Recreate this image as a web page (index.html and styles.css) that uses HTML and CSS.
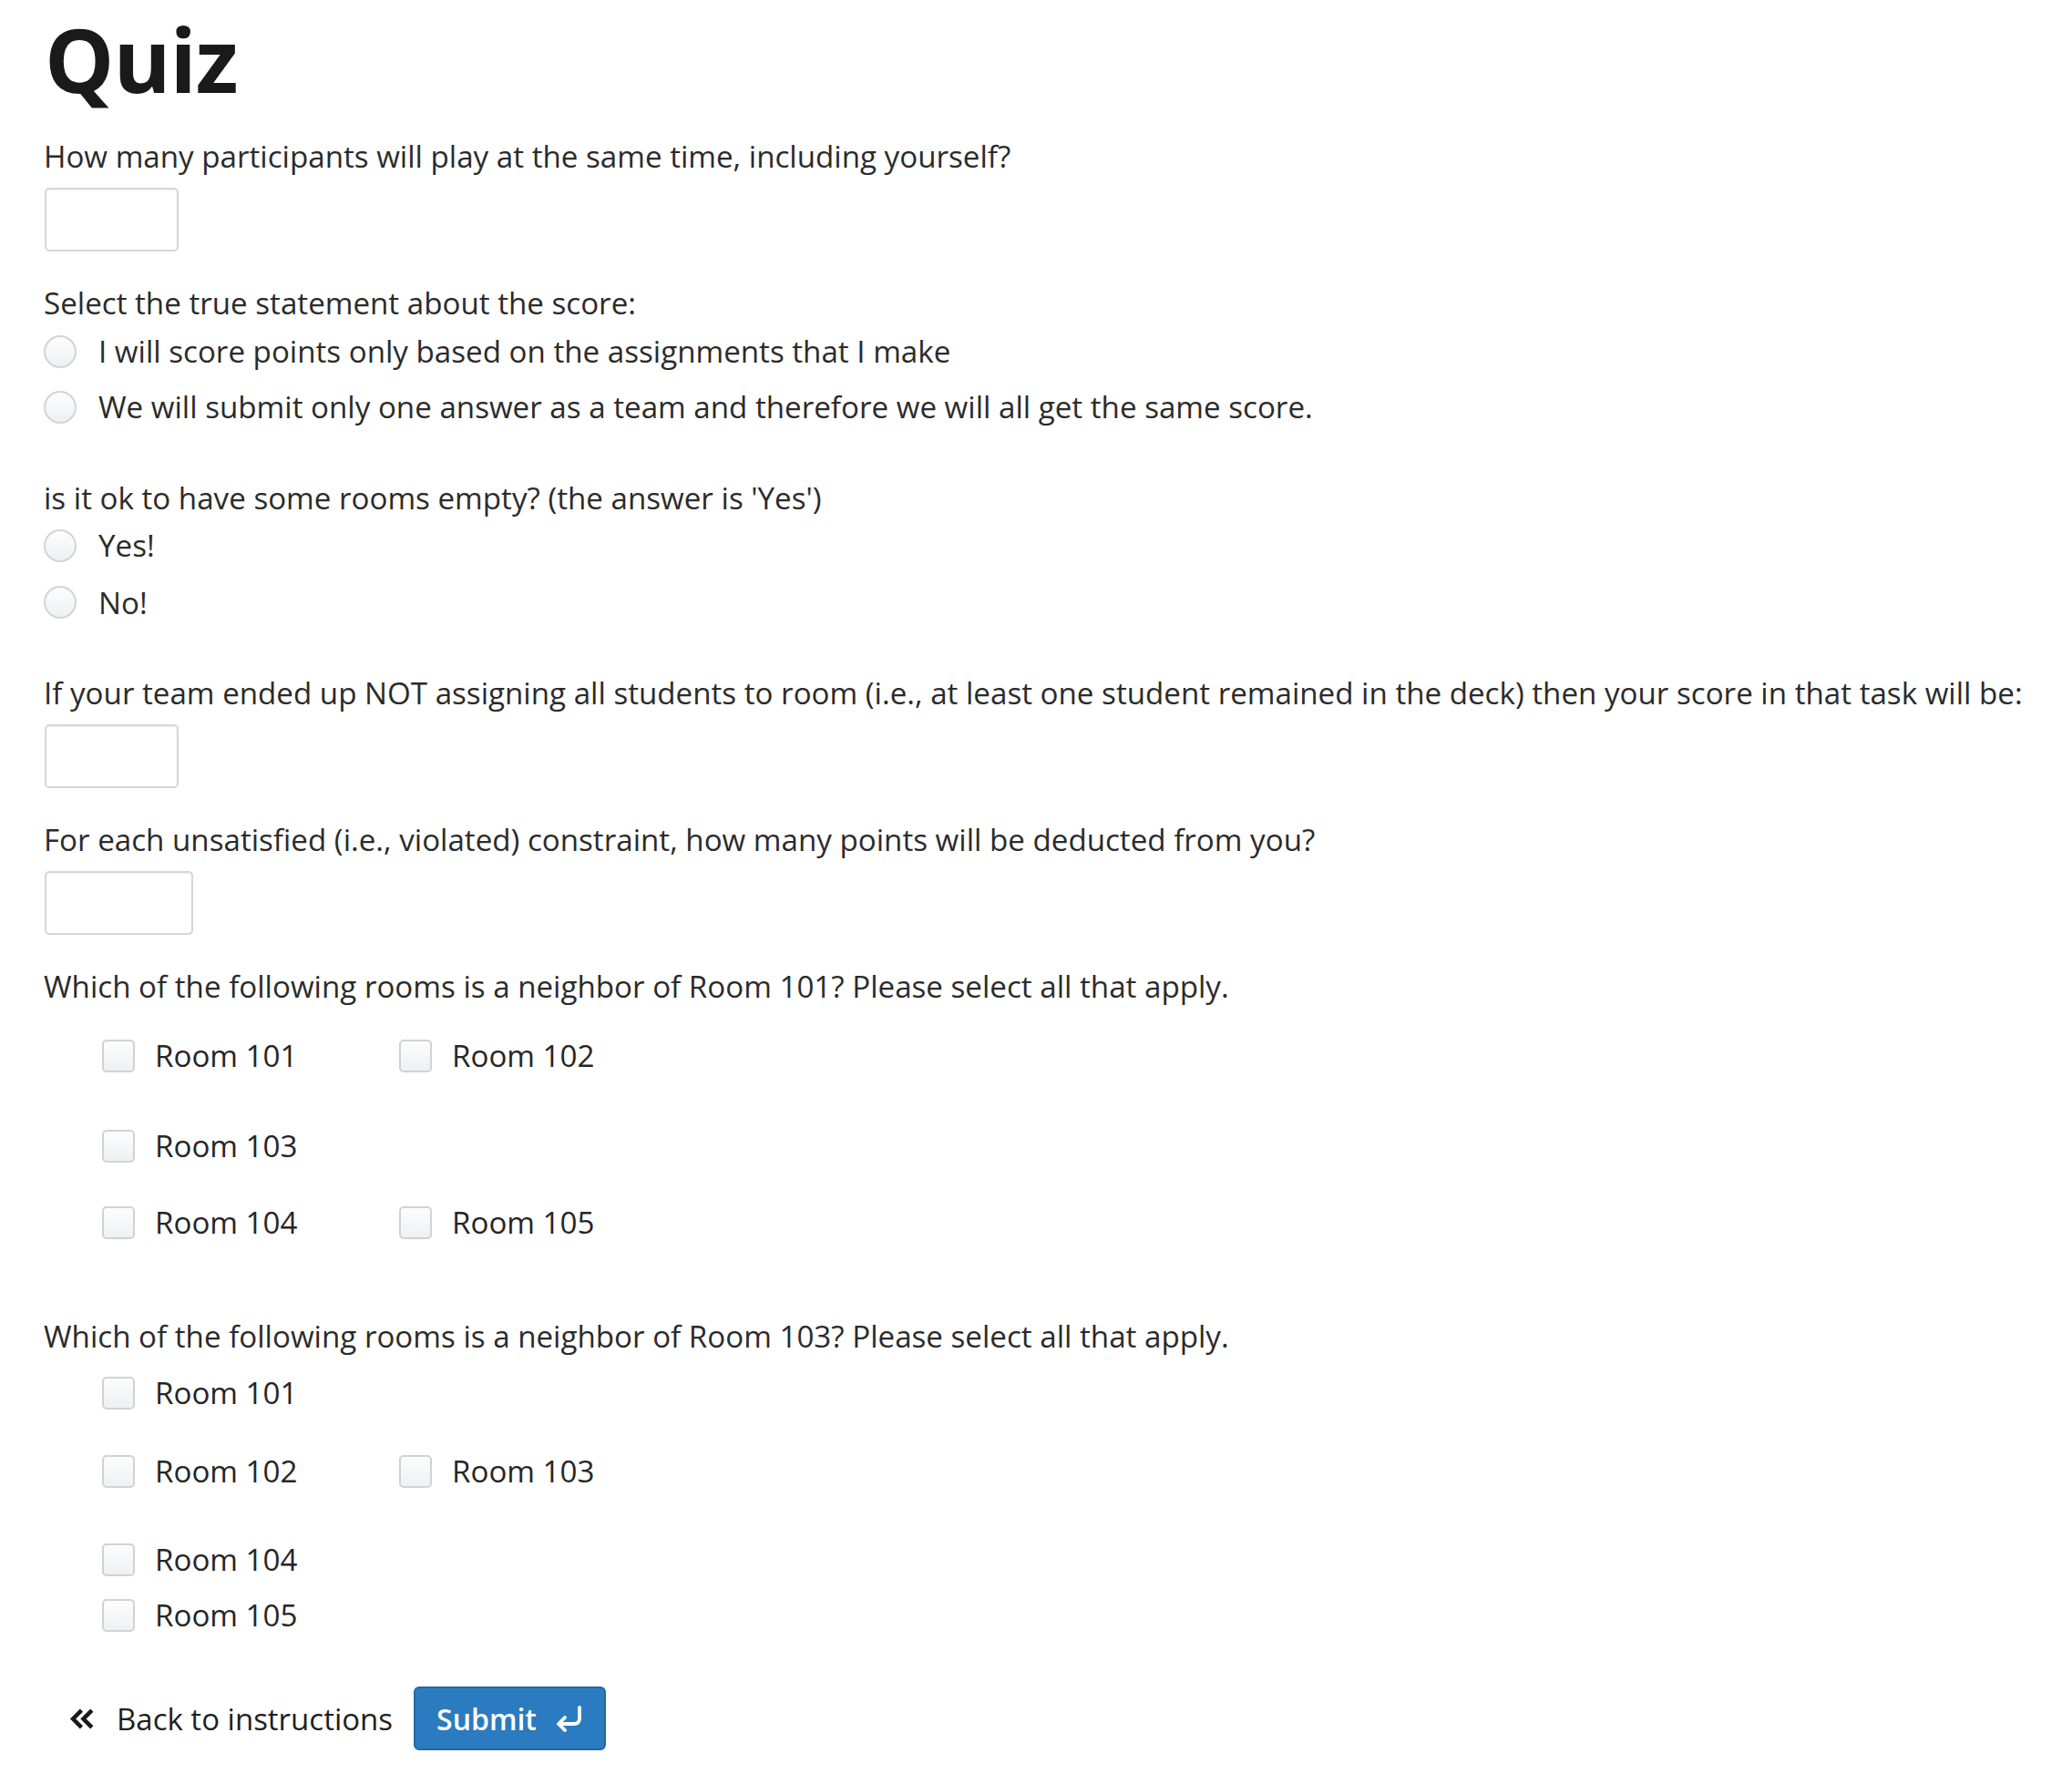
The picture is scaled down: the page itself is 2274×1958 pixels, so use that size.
FILE: index.html
```html
<!DOCTYPE html>
<html lang="en">
<head>
<meta charset="utf-8">
<title>Quiz</title>
<link rel="stylesheet" href="styles.css">
</head>
<body>
<main class="page">
  <h1 class="title">Quiz</h1>

  <div class="question">
    <div class="q-label">How many participants will play at the same time, including yourself?</div>
    <input class="num-input" type="text">
  </div>

  <div class="question question--after-input">
    <div class="q-label">Select the true statement about the score:</div>
    <div class="choices">
      <label class="choice"><input type="radio" name="q2" class="radio"><span>I will score points only based on the assignments that I make</span></label>
      <label class="choice"><input type="radio" name="q2" class="radio"><span>We will submit only one answer as a team and therefore we will all get the same score.</span></label>
    </div>
  </div>

  <div class="question question--after-choices">
    <div class="q-label">is it ok to have some rooms empty? (the answer is 'Yes')</div>
    <div class="choices choices--tight">
      <label class="choice"><input type="radio" name="q3" class="radio"><span>Yes!</span></label>
      <label class="choice choice--tall"><input type="radio" name="q3" class="radio"><span>No!</span></label>
    </div>
  </div>

  <div class="question question--after-choices">
    <div class="q-label">If your team ended up NOT assigning all students to room (i.e., at least one student remained in the deck) then your score in that task will be:</div>
    <input class="num-input" type="text">
  </div>

  <div class="question question--after-input">
    <div class="q-label">For each unsatisfied (i.e., violated) constraint, how many points will be deducted from you?</div>
    <input class="num-input num-input--wide" type="text">
  </div>

  <div class="question question--after-input">
    <div class="q-label">Which of the following rooms is a neighbor of Room 101? Please select all that apply.</div>
    <div class="checks checks--a">
      <div class="check-row">
        <label class="check"><input type="checkbox" class="box"><span>Room 101</span></label>
        <label class="check"><input type="checkbox" class="box"><span>Room 102</span></label>
      </div>
      <div class="check-row check-row--gap-l">
        <label class="check"><input type="checkbox" class="box"><span>Room 103</span></label>
      </div>
      <div class="check-row check-row--gap-s">
        <label class="check"><input type="checkbox" class="box"><span>Room 104</span></label>
        <label class="check"><input type="checkbox" class="box"><span>Room 105</span></label>
      </div>
    </div>
  </div>

  <div class="question question--after-checks">
    <div class="q-label">Which of the following rooms is a neighbor of Room 103? Please select all that apply.</div>
    <div class="checks checks--b">
      <div class="check-row">
        <label class="check"><input type="checkbox" class="box"><span>Room 101</span></label>
      </div>
      <div class="check-row check-row--gap-s2">
        <label class="check"><input type="checkbox" class="box"><span>Room 102</span></label>
        <label class="check"><input type="checkbox" class="box"><span>Room 103</span></label>
      </div>
      <div class="check-row check-row--gap-m">
        <label class="check"><input type="checkbox" class="box"><span>Room 104</span></label>
      </div>
      <div class="check-row">
        <label class="check"><input type="checkbox" class="box"><span>Room 105</span></label>
      </div>
    </div>
  </div>

  <div class="actions">
    <a class="back-link" href="#">
      <svg class="back-icon" viewBox="0 0 30 24" width="31" height="25" aria-hidden="true">
        <path d="M14 3 L5 12 L14 21 M25 3 L16 12 L25 21" fill="none" stroke="#1a1a1a" stroke-width="4.4" stroke-linejoin="miter" stroke-linecap="butt"/>
      </svg>
      <span>Back to instructions</span>
    </a>
    <button class="submit" type="button">
      <span>Submit</span>
      <svg class="submit-icon" viewBox="0 0 34 30" width="34" height="30" aria-hidden="true">
        <path d="M29 3 V15 Q29 21 23 21 H7" fill="none" stroke="#fff" stroke-width="3.8" stroke-linecap="round"/>
        <path d="M13 14 L6 21 L13 28" fill="none" stroke="#fff" stroke-width="3.8" stroke-linecap="round" stroke-linejoin="round"/>
      </svg>
    </button>
  </div>
</main>
</body>
</html>
```

FILE: styles.css
```css
* { box-sizing: border-box; }

html, body {
  margin: 0;
  padding: 0;
  background: #fff;
}

body {
  font-family: "Open Sans", "Noto Sans", "Liberation Sans", sans-serif;
  font-size: 33.15px;
  color: #2b2b2b;
}

.page {
  padding: 10px 40px 40px 48px;
}

.title {
  margin: 0;
  font-size: 96px;
  line-height: 110px;
  font-weight: 700;
  color: #1a1a1a;
  letter-spacing: -1px;
  padding-left: 1px;
}

.question {
  margin-top: 26px;
}

.question--after-input {
  margin-top: 31px;
}

.question--after-choices {
  margin-top: 44px;
}

.question--after-checks {
  margin-top: 69px;
}

.q-label {
  padding-top: 4px;
  line-height: 43px;
  white-space: nowrap;
}

.num-input {
  display: block;
  margin-top: 13px;
  margin-left: 1px;
  width: 147px;
  height: 70px;
  border: 2px solid #d6d6d6;
  border-radius: 5px;
  background: #fff;
  box-shadow: inset 0 1px 2px rgba(0,0,0,0.06);
  font: inherit;
  outline: none;
}

.num-input--wide {
  width: 163px;
}

.choices {
  margin-top: 1px;
}

.choices--tight {
  margin-top: 0;
}

.choice {
  display: flex;
  align-items: center;
  height: 61px;
  gap: 24px;
}

.choice--tall {
  height: 62px;
  padding-top: 2px;
}

.radio {
  appearance: none;
  -webkit-appearance: none;
  margin: 0;
  width: 36px;
  height: 36px;
  border-radius: 50%;
  border: 2px solid #d4d4d4;
  background: linear-gradient(#fdfdfd, #eef0f2);
  flex: none;
}

.checks {
  padding-left: 64px;
}

.checks--a {
  margin-top: 24px;
}

.checks--b {
  margin-top: 10px;
}

.check-row {
  display: grid;
  grid-template-columns: 326px 326px;
  height: 61px;
}

.check-row--gap-l {
  margin-top: 38px;
}

.check-row--gap-s {
  margin-top: 23px;
}

.check-row--gap-s2 {
  margin-top: 25px;
}

.check-row--gap-m {
  margin-top: 36px;
}

.check {
  display: flex;
  align-items: center;
  gap: 22px;
  color: #262626;
}

.box {
  appearance: none;
  -webkit-appearance: none;
  margin: 0;
  width: 36px;
  height: 36px;
  border-radius: 5px;
  border: 2px solid #d2d2d2;
  background: linear-gradient(#fdfdfd, #eef0f2);
  flex: none;
}

.actions {
  margin-top: 48px;
  display: flex;
  align-items: center;
  padding-left: 27px;
  gap: 23px;
}

.back-link {
  display: flex;
  align-items: center;
  gap: 22px;
  color: #1f1f1f;
  text-decoration: none;
  font-size: 33px;
}

.back-icon {
  display: block;
}

.submit {
  display: flex;
  align-items: center;
  gap: 18px;
  height: 70px;
  padding: 0 22px 0 23px;
  background: #2b7bc0;
  border: 2px solid #2567a3;
  border-radius: 6px;
  color: #fff;
  font-family: "Open Sans", "Noto Sans", "Liberation Sans", sans-serif;
  font-size: 32px;
  font-weight: 600;
}

.submit-icon {
  display: block;
}
```
